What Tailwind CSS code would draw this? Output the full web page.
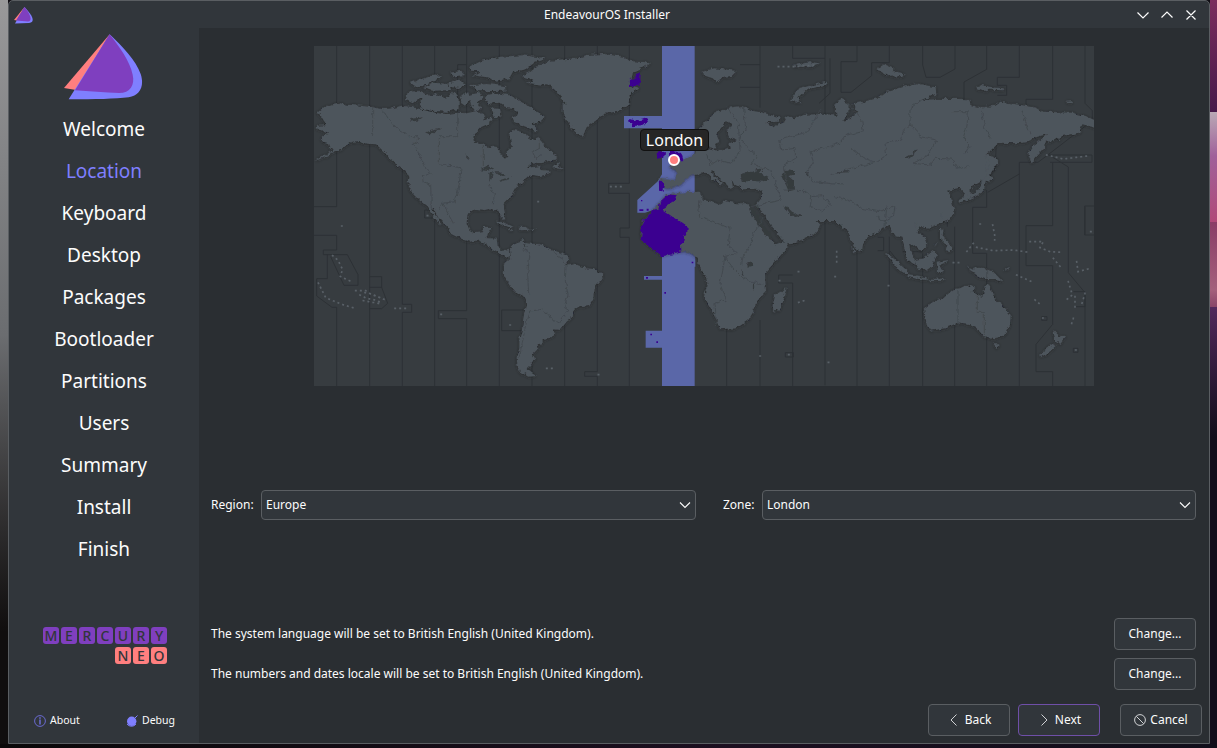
<!DOCTYPE html>
<html lang="en">
<head>
<meta charset="utf-8">
<title>EndeavourOS Installer</title>
<script src="https://cdn.jsdelivr.net/npm/@tailwindcss/browser@4"></script>
</head>
<body class="h-[748px] w-[1217px] overflow-hidden bg-[#0e0c12] font-['Noto_Sans',sans-serif] text-[12px] text-[#fcfcfc]">
<div class="flex h-[748px] flex-col">
<div class="flex h-[744px]">
  <div class="w-2 shrink-0 bg-linear-to-b from-[#99999a] via-[#6b6d70] via-45% to-[#100e0e] to-85%"></div>
  <div class="flex w-[1202px] shrink-0 flex-col rounded-t-[5px] border border-[#5a5e62] bg-[#31363b]">
    <header class="flex h-[27px] shrink-0 items-center justify-between pr-2 pl-1">
      <svg class="h-[18px] w-[68px]" viewBox="0 0 68 18" fill="none"><path d="M11.500 1 1 14l3 .5Z" fill="#ff7f7f"/><path d="M11.500 1 2 17.400 16 17c6-.4 4-6-1-12Z" fill="#7f7fff"/><path d="M11.500 1 3 14.500l12 1c4-.5 3-5-.5-10.500Z" fill="#7f3fbf"/></svg>
      <h1 class="text-[12px]">EndeavourOS Installer</h1>
      <svg class="h-4 w-[68px]" viewBox="0 0 68 16" fill="none" stroke="#fcfcfc" stroke-width="1.200"><path d="m4.500 5.500 5.500 5.500 5.500-5.500M28.500 10.500 34 5l5.500 5.500M53.500 3.500l9 9M62.500 3.500l-9 9"/></svg>
    </header>
    <div class="flex min-h-0 flex-1">
      <aside class="flex w-[190px] shrink-0 flex-col items-center">
        <svg class="mt-1.5 h-[68px] w-20" viewBox="0 0 240 204"><path d="M137 1 0 162l36 6Z" fill="#ff7f7f"/><path d="M137 1 14 196c80 0 140-1 180-6 34-4 48-34 36-70C216 80 176 38 137 1Z" fill="#7f7fff"/><path d="M137 1 33 169c42 3 90 7 132 8 34 0 48-25 41-55C198 82 166 38 137 1Z" fill="#7f3fbf"/></svg>
        <nav class="mt-1.5 flex flex-col items-center text-[19px]">
          <span class="flex h-[42px] items-center">Welcome</span>
          <span class="flex h-[42px] items-center text-[#7f7fff]">Location</span>
          <span class="flex h-[42px] items-center">Keyboard</span>
          <span class="flex h-[42px] items-center">Desktop</span>
          <span class="flex h-[42px] items-center">Packages</span>
          <span class="flex h-[42px] items-center">Bootloader</span>
          <span class="flex h-[42px] items-center">Partitions</span>
          <span class="flex h-[42px] items-center">Users</span>
          <span class="flex h-[42px] items-center">Summary</span>
          <span class="flex h-[42px] items-center">Install</span>
          <span class="flex h-[42px] items-center">Finish</span>
        </nav>
        <div class="mt-[57px] flex w-[126px] flex-col gap-[3px] text-[14px] leading-none text-[#31363b]">
          <div class="flex justify-end gap-0.5">
            <b class="flex h-[17px] w-4 items-center justify-center rounded-[3px] bg-[#7f3fbf] font-medium">M</b><b class="flex h-[17px] w-4 items-center justify-center rounded-[3px] bg-[#7f3fbf] font-medium">E</b><b class="flex h-[17px] w-4 items-center justify-center rounded-[3px] bg-[#7f3fbf] font-medium">R</b><b class="flex h-[17px] w-4 items-center justify-center rounded-[3px] bg-[#7f3fbf] font-medium">C</b><b class="flex h-[17px] w-4 items-center justify-center rounded-[3px] bg-[#7f3fbf] font-medium">U</b><b class="flex h-[17px] w-4 items-center justify-center rounded-[3px] bg-[#7f3fbf] font-medium">R</b><b class="flex h-[17px] w-4 items-center justify-center rounded-[3px] bg-[#7f3fbf] font-medium">Y</b>
          </div>
          <div class="flex justify-end gap-0.5">
            <b class="flex h-[17px] w-4 items-center justify-center rounded-[3px] bg-[#ff7f7f] font-medium">N</b><b class="flex h-[17px] w-4 items-center justify-center rounded-[3px] bg-[#ff7f7f] font-medium">E</b><b class="flex h-[17px] w-4 items-center justify-center rounded-[3px] bg-[#ff7f7f] font-medium">O</b>
          </div>
        </div>
        <div class="mt-[49px] flex w-full justify-between pr-6 pl-[25px] text-[10.500px]">
          <span class="flex items-center gap-1"><svg class="size-3" viewBox="0 0 12 12" fill="none" stroke="#7070e0"><circle cx="6" cy="6" r="5.400" stroke-width=".9"/><path d="M6 2.300v1.400M6 4.600v5" stroke-width="1.400"/></svg>About</span>
          <span class="flex items-center gap-1"><svg class="size-3" viewBox="0 0 12 12"><circle cx="5.700" cy="6.300" r="4.700" fill="#7f7fff"/><path d="M1 9a5.600 5.600 0 0 0 9 0M9 3l2.500-2.500" fill="none" stroke="#7f7fff"/></svg>Debug</span>
        </div>
      </aside>
      <main class="flex min-w-0 flex-1 flex-col bg-[#2a2e32] pt-[18px]">
        <div class="relative ml-[115px] h-[340px] w-[780px]">
        <svg class="h-[340px] w-[780px]" viewBox="12 18 2340 1020">
          <defs>
            <filter id="coast" x="-2%" y="-2%" width="104%" height="104%"><feTurbulence type="fractalNoise" baseFrequency=".07" numOctaves="3" seed="4"/><feDisplacementMap in="SourceGraphic" scale="15" xChannelSelector="R" yChannelSelector="G" result="d"/><feDropShadow in="d" dx="0" dy="2" stdDeviation="5" flood-color="#202326" flood-opacity=".65"/></filter>
            <filter id="rough"><feTurbulence type="fractalNoise" baseFrequency=".07" numOctaves="3" seed="4"/><feDisplacementMap in="SourceGraphic" scale="15" xChannelSelector="R" yChannelSelector="G"/></filter>
          </defs>
          <path fill="#373c40" d="M12 18h2340v1020H12Z"/>
          <!-- time zone boundaries on the oceans -->
          <g fill="none" stroke="#2d3135" stroke-width="3">
            <path d="M80 18v482H12M12 586h68v44H40v14h72l32 60v32h-42L62 650M52 644v72H20v52l46 34h14v236M179 18v1020M179 710h36v32h-36M215 742l18 48-18 16h-36M277 18v775h28v24h-28v221M374 18v492h-30v24h30v504M470 18v56h-27v216h-55v85h40M470 74v738h-85v24h85v202M568 18v1020M575 810h70v62h-70ZM666 18v1020M764 18v1020M862 18v977h-38v14h38v29M958 18v412h-62v30h62v104h-28v28h28v446"/>
            <path d="M1250 850v188M1350 18v185M1290 74h60M1290 142h60M1350 840v198M1448 18v37h97M1545 18v502M1641 18v47h-48v92h30l62-50V68h53V18M1560 55v105l-33 30M1641 560v478M1545 520v516M1448 705h-42v24h42v309M1838 18v57l10 37h42l45-25V18M1738 590v448M1703 592h18v40h-18M1740 633l55 70M2030 18v70l-68 38v54M2128 18v94h-66v24h28v30h-28M2228 18v160h-80v18M2325 18v172l22 22v30l-130 100-33 25h-56v671M2210 345h136v22h-126M2060 290l-5 100-35 45M2030 450v52h-42v138h42v398M2217 345l58 36v317l50 60v280M2128 402l-95 55M1934 560v478M1912 440v120M1838 580v55h-60M1838 640v398M2228 367v190h-80v120h80v176l-50 60v82h50v43M2325 500v85M2352 498h-28v87h28M2290 755h35v45h-32M2195 830h16v11h-16ZM2290 925h14v12h-14ZM1426 938h24v13h-24ZM1448 592h14v18h-14"/>
          </g>
          <!-- selected zone band -->
          <g fill="#5a67a8">
            <path d="M1056 18h98v1020h-98v-115h-49v-51h49V719h-54v-11h54V510h-26l-25 8h-23v-38l60-55 14-22V265H942v-37h114ZM1135 635h19l2 25v20h-21Z"/>
          </g>
          <g filter="url(#coast)" fill="#4d545b">
            <path d="m25 215 20-15 20-7 20-5 25 6 40 3 35 4 35 7 25-3 30-8 25 3 30 7 30 8 25 5 25 2 30-4 30 2 20-5 15-3 15 13 5 15 20-8-5 18-25 10-15 15-10 15 2 15 18 5 20 8 30 7 12 5v15l13 11 7-6-2-15 15-15v-20l-7-15 7-15 20 2 25 8 10 20 20-2 8-8 7 15 15 20 30 20v13l-40 7-35 7-15 13 40-7 5 12 25 2-8 11-22 5-25-3-15 10-10 13-15 4-10 18-10 20-15 10-12 12 2 18 5 27-8 2-10-20-7-10-15-4-20 5-25-3-20 7-8 15-2 20 8 20 17 10 23-2 4-16h23l-10 15-5 18 30 2 3 25 12 12 22-3 6 13-4 8-14-3-20-8-17-10-13-15-35-13-20 3-30-10-25-12-10-18-15-18-15-14-15-28-5 3 20 27 10 22-20-22-22-34-25-20-20-20-13-25 3-25-10-18-25-17-25-20-15-20-25-23-25-2-25-8-25 3-20 15-25 15-30 15-35 12 25-14 35-18-15-10-5-12-25-8 15-15 15-5-40-17 5-7 27-1Z"/>
            <path d="m600 625 20-18 20-7 10 10 40 3 15 4 10 10 30 10 25 8 8 15-13 18 25-5 25 10 35 4 25 13 3 13-23 27-5 35-12 20-23 3-25 15-2 17-18 15-20 25-22-2 7 17-20 10-17 2v13l-15 3 2 12-17 18 7 12-15 20-10 10 10 10 18 13-23 2-25-15-8-20-2-25 8-25v-30l7-20 5-40 8-40v-22l-33-16-15-22-22-35 5-30 19-17Z"/>
            <path d="m635 108 25-13 30-20 30-13 40-4 40-3 30-10 50-3 60 8 15 12 67 6-27 17-25 10-10 45 25 5-25 20-5 30-35 20-40 7-20 18-30 22-12 28-23-15-20-25-17-30v-25l12-5-20-20-15-20-15-12-40-6-30-2 20-10Z"/>
            <path d="m300 130 25-10 40-12 28-3-15 15-30 15-35 5ZM340 142l30-14 45 4 5 18-45 2ZM288 180l5-25 40-2 20 15-30 10-15 12ZM330 205l8-35 40-8 30 14 20-20 18 20v32l-35 7-45-3ZM420 98l30-5 15 12-30 4ZM415 130l30-8 25 8-20 14-30-3ZM455 165l20-8 5 22-15 18-12-8ZM485 200l-10-35 35-8 10 16-17 12 12 20-20 10ZM480 135l50-3 55 6 2 14-80 2ZM480 80l35-18 60-12 60-4 70 8-30 12-25 22-40 8-10 18-40 8-30-10-40-6 20-12-30-2ZM530 165l30-5 40 6 30 16 35 22 40 26-15 15-25 5 18 18-8 4-35-15-30-12-5-12 20-8-10-20-30-5-20-12-30 3-10-13ZM545 205l25 2 5 20-20 8ZM558 545l25 2 28 14-12 2-38-14ZM622 560l25 1 13 8-28 2ZM597 568h12v4h-12ZM664 566h12v4h-12ZM730 385l15-20 2 12 14 10ZM1175 95l35-10 30 3 40 5-15 15-20 2-25 17-12-12-30-10Z"/>
            <path d="m1045 415 50 2 10-22-30-17 25-8 35-18 20-12 5-25 15-18 18 2-8 22 15 8 30 3 30-6-5-15 25-10-22-8-8-18 15-25-15-6-20 24-12 20 7 15-15 25-15-5-5-20-15 5-15-10-5-20 30-30 30-30 40-15 40-5 35 15 30 5 50 15v12l-40 1 18 16 35-17 10-17 20 7 25-10 50-3 40-2 12 15-4-45 22-12 18 14-1 28-18 22 28-5 6-15 14-5-18-25 30-5 50-15 20-15 50-15 40-12 60 12 2 20-42 18 50-3h60l30 1 5 20 20 5 50-5 20-13 45 8 60 10 20 12 90 3 40 10 50 23-20 12-40-10-10 25-50 10-25 15-25 2-2 18-28 30-12 18-10-28 7-20 50-40-35 8-20 15-35 4-55-2-40 37 30 6 5 22-20 30-35 25-25 15v30l-15 10-5-25-15-15-35 10 10 15 5 25 7 20-17 25-5 5-30 10-25 10-25-5-10 15 25 20 5 20-20 20-20-15-15-10 5 30 15 25v12l-25-17-7-25-8-40-20-5-20-30-20 5-15 15-25 10-15 15-5 25-12 8-18-28-12-35-18-10-20-20h-60l10 10 5 8-20 22-45 20-42 10-18-25-45-65-25-30 15-20 5-20-10-7-45 2-30-15-7-15 4 25-12 5-10-20-25-20-15-17-5 7 15 15 25 15-10 10-20-20-20-15-10-8-13 8-32 5-25 25-25 10-25 5Z"/>
            <path d="m1070 463 25-3 35-3 40-2 5 23 30 7 25 10 10-13 40 8h35l5 15 10 30 25 35 30 30 7 13 43-8-5 20-30 35-35 40 3 55-33 35-5 25-15 25-35 25-50 3-10-28-25-45-13-25 10-40-4-20-23-35v-25l-30-15h-20l-60 10-45-35-15-15v-50l35-35Z"/>
            <path d="m1430 740-10 40-12 30-18 5-2-20 7-30 20-10Z"/>
            <path d="m1842 805 28-20 30-10 30-27 20-3 20-10 25 7-10 13 30 15 17-40 13 25 10 25 25 18 22 27-2 30-20 35-25 5-35-7-20-23-20-10-40-5-35 15-45 7-10-17ZM2047 910h21l-8 17ZM2230 870l18 18 17 4-17 20-13-12ZM2230 910l10 5-35 33-17-6Z"/>
            <path d="m1970 676 15 12 20-8 45 15 30 32-25-7h-25l-30-15-20-15ZM1815 660l25-5 30-23 8 13-13 35-15 10-30-5ZM1725 638l25 17 45 40-5 7-35-22ZM1790 705l60 10v6l-60-10ZM1855 716h50v4h-50ZM1880 668l40-6-30 12 12 22-17 3ZM1890 565l10 5-2 20 22 20 8 25-20-5 4-15-22-20ZM1868 617l14-12v3ZM1627 620l10 10-7 8ZM1810 550l14 2-6 8ZM1893 535l5-18-2 20ZM2030 400l20 12-15 10-7-3-5 25-10 18-35 14-30 12-3-10 40-18 20-10 6-17ZM2030 338l8 32-8 30-5-20ZM1440 180l25-35 85-20 2 7-62 18-25 25 7 15ZM1700 85l20-12 25 10 10 12 30 5-5 8-40 2ZM1995 140l20-5 40 8 30 2-5 6-40-2-10 5ZM2265 185l20-1 5 5h-18ZM2080 690l20-10-5 8ZM1400 80l15-2M1450 75l50-8 30 3-30 12-35-2Z"/>
          </g>
          <!-- inland seas and lakes -->
          <g filter="url(#rough)" fill="#363a3e">
            <path d="m1290 415 12-18 20-5 14 3 2-7 22-2-10 12 22 12 5 10-20 5-30-3-35 3ZM1412 405l20-14 20 3v10l-17 4 18 16 2 28-18 5-8-20ZM1487 398l8-2-1 12ZM1580 400l5-6h35l-1 3-30 1ZM1785 353l20-10 14-20-2 16-20 17ZM1318 500l12 5 30 45 20 30 8 20-12-2-28-38ZM1420 497l12 4 20 20 10-2 14 8-20 4-20-8ZM1312 670l18-3-4 13-13 4ZM1295 690l10 25 2 3-12-18ZM1328 722l4 14 1 14-5-10ZM300 237l20-3 22-2-12 8-25 5ZM345 277l15-4 35-8-25 12-12 6ZM463 340l10 12 5 10-10-10ZM510 388l22-11 18 9-15 4ZM538 395l10 2-3 20-7 8ZM553 397h20l10 8-15 3ZM568 422l38-13-10 8-25 8ZM640 613h6v10h-6ZM1120 445l8-3"/>
          </g>
          <!-- zone boundaries over land -->
          <g filter="url(#rough)" fill="none" stroke="#40464c" stroke-width="2.500">
            <path d="M188 200v88M217 212l20 25 30 35 35 18h23v20h-18l20 30 20 45 15 15-25 10 3 15 22 8 2 75M443 218v72h-55v85l40 2 25 8-5 45-12 55-40 5-10 20M520 318v60M538 430l5 20 10 8-3 38M688 300v25l-20 12 10 20 15-10M400 495l30 55M640 628l20 12-7 60 3 60M730 640l30 18 8 22-2 40 8 45-10 35 12 8-32 40-20-10-10-15-20-15-32 5-12 30-10 50-12 60"/>
            <path d="M1300 200l8 70-20 20 20 30 35 30-20 20 55 20 15 30 20 60-90 20M1250 200l35 50 5 80-25 40-45-10-20 15-10-30M1530 210l-20 35-15 30-35 10-50 15 5 30 40-5 2 30-35 20 10 60M1615 190l40 50 5 35-50 10-20 25-90 25 10 30-20 30 20 30 90 10M1620 325l45 30 30 12-80 20-50 20M1835 180l-35 25v50l-20 15-5 30-50 10 5 35-30 20M1800 255l20 15 10 20 50 10-10 15-15 30-45 25 50 5 15-20 50 2 20 30 35-10M1930 215h45l-5 50-10 30 20 20-15 25M2030 190l-15 25 10 50 20 30M2135 210l10 30 15 40M1420 450l60 2 25 20-5 30 35 10 30-20-30-25-30 3M1575 470l50 15 30 20 50 10 50-15-5 30-30 15-20-15M1725 560l5-60M1170 480l-5 50 45 15 50 20-5 50 25 25-35 10-5 30-10 50 20 50-35 10 5 70M1360 530l-30 50-10 40-20 25-5 30M1240 645l30 40 30 30 60 20M1944 750v105M2002 765v52h21v70M2030 685v35"/>
          </g>
          <!-- small islands -->
          <g fill="none" stroke="#596067" stroke-width="5" stroke-linecap="square" stroke-dasharray="1 14">
            <path d="M68 647l16 14 14 28-8 20 30 14M25 729l22 44 24 10 30 12 35 10M137 752l30 0 15 10 50 20M150 765l20 10 25 5 25 10M160 782l55 10M165 758l20 4 28 12M255 805h45M393 823h6M352 527h5M95 558h4M600 855h5M710 985h20M865 1004h5M684 485h4M902 440h40M1580 635v45M1575 710h4M1466 787l16-5M1408 722h4M1436 944h4M1555 967h12M1350 948h4M1465 695h4M2048 555l6 30v15M1990 610l-28 35M2000 622l50 10 60-2 40 6M2160 605h40l-10 18 30 12 35 2M2230 655l25 30M2300 665l4 30 30-8M2275 725l12 40 -25 20M2295 770v35M2325 760l-12 40M2290 835l-8 25M2175 780l12 10M2120 705l45 20M1735 737h3M2010 552h3M2210 345l50 12 80-10M1405 80h50l60-5M1930 668h20M2297 930h5M2198 834h5M2342 575h4"/>
          </g>
          <!-- selected zone land -->
          <g filter="url(#rough)" fill="#3a0090">
            <path d="m1030 510 15-5 5-20 25-22 22 3-2 18-40 24 78 54-2 20-11 4 2 18-10 6 3 28-60 11-30-22-30-25 3-25-8-8 8-25ZM1047 422l14 1 2 8-6 23-10-2ZM950 240l12-3 15 5 30-6 8 8-20 12-28 3-6-10ZM960 120l28-8 1 26-30 1ZM975 105l15-8-3 22ZM1040 340l15-5 10 2-2 16-22 3ZM1080 330l25 2 10 10 5 18-25 5-15-5Z"/>
          </g>
          <g fill="#3a0090"><path d="M993 480h4v4h-4ZM988 508h12v5h-12ZM1010 506h6v6h-6ZM1008 711h6v5h-6ZM1063 756h5v5h-5ZM1021 881h5v5h-5ZM1039 904h5v5h-5ZM1145 665h5v5h-5Z"/></g>
          <circle cx="1092" cy="360" r="15" fill="#ff7f7f" stroke="#fff" stroke-width="6"/>
        </svg>
        <div class="absolute top-[83px] left-[326px] flex h-[22px] w-[69px] items-center justify-center rounded-[4px] border border-[#111] bg-[#262626] text-[16px]">London</div>
        </div>
        <div class="mt-[104px] flex h-[30px] items-center pr-[13px] pl-3">
          <span class="w-[50px]">Region:</span>
          <div class="flex h-[30px] w-[435px] items-center justify-between rounded-[4px] border border-[#5a5e62] bg-[#31363b] pr-1 pl-1"><span>Europe</span><svg class="h-3 w-3" viewBox="0 0 12 12" fill="none" stroke="#fcfcfc" stroke-width="1.100"><path d="m1 3.500 5 5 5-5"/></svg></div>
          <span class="ml-[27px] w-[39px]">Zone:</span>
          <div class="flex h-[30px] w-[434px] items-center justify-between rounded-[4px] border border-[#5a5e62] bg-[#31363b] pr-1 pl-1"><span>London</span><svg class="h-3 w-3" viewBox="0 0 12 12" fill="none" stroke="#fcfcfc" stroke-width="1.100"><path d="m1 3.500 5 5 5-5"/></svg></div>
        </div>
        <div class="mt-[98px] flex items-center justify-between pr-[13px] pl-3"><span>The system language will be set to British English (United Kingdom).</span><button class="h-8 w-[82px] rounded-[4px] border border-[#5a5e62] bg-[#31363b]">Change...</button></div>
        <div class="mt-2 flex items-center justify-between pr-[13px] pl-3"><span>The numbers and dates locale will be set to British English (United Kingdom).</span><button class="h-8 w-[82px] rounded-[4px] border border-[#5a5e62] bg-[#31363b]">Change...</button></div>
        <div class="mt-3.5 flex justify-end pr-[7px]">
          <button class="flex h-8 w-[82px] items-center justify-center gap-1 rounded-[4px] border border-[#5a5e62] bg-[#31363b]"><svg class="h-3.5 w-3.5" viewBox="0 0 14 14" fill="none" stroke="#d0d2d4"><path d="m9.500 1.500-5.500 5.500 5.500 5.500"/></svg>Back</button>
          <button class="ml-2 flex h-8 w-[82px] items-center justify-center gap-1 rounded-[4px] border border-[#6f4fa8] bg-[#31363b]"><svg class="h-3.5 w-3.5" viewBox="0 0 14 14" fill="none" stroke="#d0d2d4"><path d="m4.500 1.500 5.500 5.500-5.500 5.500"/></svg>Next</button>
          <button class="ml-5 flex h-8 w-[82px] items-center justify-center gap-1 rounded-[4px] border border-[#5a5e62] bg-[#31363b]"><svg class="h-3 w-3" viewBox="0 0 12 12" fill="none" stroke="#d0d2d4"><circle cx="6" cy="6" r="5.400"/><path d="m2.300 2.300 7.400 7.400"/></svg>Cancel</button>
        </div>
      </main>
    </div>
  </div>
  <div class="flex flex-1 flex-col bg-[#120d1a]">
    <div class="h-[112px] bg-linear-to-b from-[#7b2c5c] to-[#47194a]"></div>
    <div class="h-[110px] bg-linear-to-b from-[#b9a9b5] via-[#a0609a] via-40% to-[#b04878]"></div>
    <div class="h-[85px] bg-linear-to-b from-[#8a3c66] via-[#a4607c] via-80% to-[#8a4468]"></div>
    <div class="h-[130px] bg-linear-to-b from-[#52285c] to-[#120d1a]"></div>
  </div>
</div>
<div class="h-1 bg-linear-to-r from-[#0a0809] via-[#1c0f20] via-60% to-[#100e1a]"></div>
</div>
</body>
</html>
